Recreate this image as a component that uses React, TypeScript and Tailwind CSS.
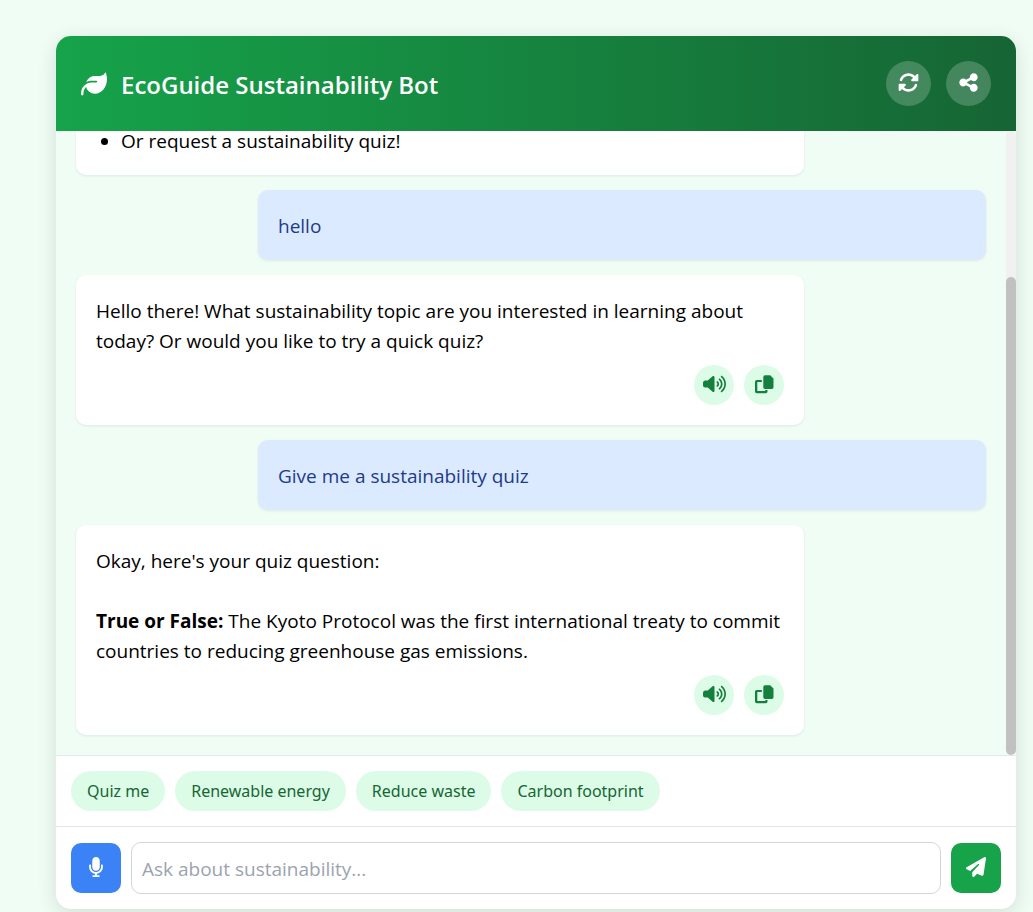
import { useEffect, useRef, useState } from "react";
import type { ReactNode } from "react";
import {
  FaLeaf,
  FaMicrophone,
  FaPaperPlane,
  FaRotate,
  FaShareNodes,
  FaVolumeHigh,
} from "react-icons/fa6";

function CopyIcon() {
  return (
    <svg viewBox="0 0 20 20" className="h-5 w-5" fill="currentColor" aria-hidden="true">
      <path d="M11 1.2h5.2L19.5 4.4v8.8a1.7 1.7 0 0 1-1.7 1.7H11A1.7 1.7 0 0 1 9.3 13.2V2.9A1.7 1.7 0 0 1 11 1.2Z" />
      <path d="M7.8 6v2H3.3v9h8v-1h2.2v1.4a1.8 1.8 0 0 1-1.8 1.8H2.8A1.8 1.8 0 0 1 1 17.4V7.8A1.8 1.8 0 0 1 2.8 6Z" />
    </svg>
  );
}

function HeaderButton({ label, children }: { label: string; children: ReactNode }) {
  return (
    <button
      type="button"
      aria-label={label}
      className="flex h-[45px] w-[45px] items-center justify-center rounded-full bg-white/20 pb-0.5 text-[21px] text-white"
    >
      {children}
    </button>
  );
}

function RoundAction({ label, children }: { label: string; children: ReactNode }) {
  return (
    <button
      type="button"
      aria-label={label}
      className="flex h-10 w-10 items-center justify-center rounded-full bg-[#dcfce7] pb-0.5 text-[#15803d]"
    >
      {children}
    </button>
  );
}

function BotMessage({ children, actions = true }: { children: ReactNode; actions?: boolean }) {
  return (
    <div className="w-4/5 self-start rounded-[10px] bg-white px-5 pt-[21px] pb-[19px] text-black shadow-[0_1px_3px_rgba(0,0,0,0.08)]">
      {children}
      {actions && (
        <div className="mt-[9px] mb-px flex justify-end gap-2.5">
          <RoundAction label="Read aloud">
            <FaVolumeHigh className="h-5 w-[23px]" />
          </RoundAction>
          <RoundAction label="Copy">
            <CopyIcon />
          </RoundAction>
        </div>
      )}
    </div>
  );
}

function UserMessage({ children }: { children: ReactNode }) {
  return (
    <div className="w-4/5 self-end rounded-[10px] bg-[#dbeafe] px-5 pt-[21px] pb-[19px] text-[#1e3a8a] shadow-[0_1px_3px_rgba(0,0,0,0.08)]">
      {children}
    </div>
  );
}

const suggestions = ["Quiz me", "Renewable energy", "Reduce waste", "Carbon footprint"];

export default function App() {
  const chat = useRef<HTMLDivElement>(null);
  const [draft, setDraft] = useState("");
  const [bar, setBar] = useState({ before: 0, size: 100 });

  const measure = () => {
    const el = chat.current;
    if (!el) return;
    setBar({
      before: (el.scrollTop / el.scrollHeight) * 100,
      size: (el.clientHeight / el.scrollHeight) * 100,
    });
  };

  useEffect(() => {
    if (chat.current) chat.current.scrollTop = chat.current.scrollHeight;
    measure();
    window.addEventListener("resize", measure);
    return () => window.removeEventListener("resize", measure);
  }, []);

  return (
    <div className="flex h-screen flex-col bg-[#f0fdf4] pt-9 pr-[17px] pb-[3px] pl-14 font-['Open_Sans','Noto_Sans',sans-serif] text-[19px] leading-[30px]">
      <main className="flex min-h-0 flex-1 flex-col overflow-hidden rounded-[15px] bg-white shadow-[0_5px_20px_rgba(0,0,0,0.12)]">
        <header className="flex items-center justify-between bg-[linear-gradient(to_right,#16a34a,#166534)] p-[25px] text-white">
          <h1 className="flex items-center gap-3.5 text-[24px] font-semibold">
            <FaLeaf className="h-[26px] w-[26px]" />
            <span className="pt-0.5">EcoGuide Sustainability Bot</span>
          </h1>
          <div className="flex gap-[15px]">
            <HeaderButton label="Reset chat">
              <FaRotate />
            </HeaderButton>
            <HeaderButton label="Share">
              <FaShareNodes />
            </HeaderButton>
          </div>
        </header>

        <div className="flex min-h-0 flex-1 bg-[#f0fdf4]">
          <div
            ref={chat}
            onScroll={measure}
            className="flex min-w-0 flex-1 flex-col gap-[15px] overflow-y-auto p-5 [scrollbar-width:none]"
          >
            <BotMessage actions={false}>
              <p>Hello! I'm EcoGuide. You can:</p>
              <ul className="mt-[25px] list-disc pl-[25px]">
                <li>Ask about renewable energy</li>
                <li>Learn how to reduce waste</li>
                <li>Explore your carbon footprint</li>
                <li>Or request a sustainability quiz!</li>
              </ul>
            </BotMessage>
            <UserMessage>hello</UserMessage>
            <BotMessage>
              <p>
                Hello there! What sustainability topic are you interested in learning about today?
                Or would you like to try a quick quiz?
              </p>
            </BotMessage>
            <UserMessage>Give me a sustainability quiz</UserMessage>
            <BotMessage>
              <p className="mb-[30px]">Okay, here's your quiz question:</p>
              <p>
                <strong className="font-bold">True or False:</strong> The Kyoto Protocol was the
                first international treaty to commit countries to reducing greenhouse gas emissions.
              </p>
            </BotMessage>
          </div>
          <div aria-hidden="true" className="flex w-2.5 flex-col rounded-[5px] bg-[#f1f1f1]">
            <div style={{ height: `${bar.before}%` }} />
            <div className="rounded-[5px] bg-[#c1c1c1]" style={{ height: `${bar.size}%` }} />
          </div>
        </div>

        <div className="flex flex-wrap gap-2.5 border-t border-[#e5e7eb] p-[15px]">
          {suggestions.map((text) => (
            <button
              key={text}
              type="button"
              className="h-10 rounded-full bg-[#dcfce7] px-4 font-['Noto_Sans',sans-serif] text-[16px] text-[#166534]"
            >
              {text}
            </button>
          ))}
        </div>

        <form
          onSubmit={(e) => e.preventDefault()}
          className="flex items-center gap-2.5 border-t border-[#e5e7eb] p-[15px]"
        >
          <button
            type="button"
            aria-label="Voice input"
            className="flex h-[50px] w-[50px] items-center justify-center rounded-[10px] bg-[#3b82f6] pb-0.5 text-xl text-white"
          >
            <FaMicrophone />
          </button>
          <input
            type="text"
            aria-label="Message"
            value={draft}
            onChange={(e) => setDraft(e.target.value)}
            placeholder="Ask about sustainability..."
            className="h-[52px] min-w-0 flex-1 rounded-[10px] border border-[#d1d5db] bg-white px-2.5 pt-0.5 text-black placeholder:text-[#9ca3af]"
          />
          <button
            type="submit"
            aria-label="Send"
            className="flex h-[50px] w-[50px] items-center justify-center rounded-[10px] bg-[#16a34a] pb-0.5 text-xl text-white"
          >
            <FaPaperPlane />
          </button>
        </form>
      </main>
    </div>
  );
}
